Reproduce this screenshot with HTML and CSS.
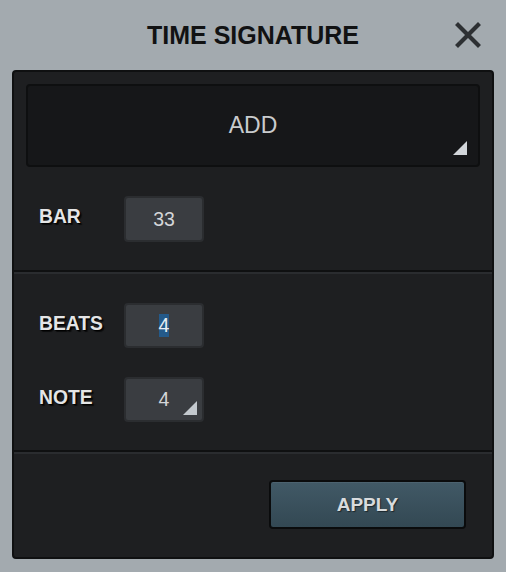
FILE: index.html
```html
<!DOCTYPE html>
<html>
<head>
<meta charset="utf-8">
<link rel="stylesheet" href="styles.css">
</head>
<body>
<div class="dialog">
  <div class="header">
    <div class="title">TIME SIGNATURE</div>
    <div class="close">
      <svg width="26" height="26" viewBox="0 0 26 26"><path d="M3 3 L23 23 M23 3 L3 23" stroke="#2d3033" stroke-width="4.2" stroke-linecap="square" fill="none"/></svg>
    </div>
  </div>
  <div class="panel">
    <div class="section first">
      <div class="mode">ADD<span class="tri big"></span></div>
      <div class="row bar-row">
        <div class="label">BAR</div>
        <div class="field tall">33</div>
      </div>
    </div>
    <div class="divider"></div>
    <div class="section">
      <div class="row">
        <div class="label">BEATS</div>
        <div class="field"><span class="sel">4</span></div>
      </div>
      <div class="row second">
        <div class="label">NOTE</div>
        <div class="field">4<span class="tri small"></span></div>
      </div>
    </div>
    <div class="divider"></div>
    <div class="footer">
      <div class="apply">APPLY</div>
    </div>
  </div>
</div>
</body>
</html>
```
FILE: styles.css
```css
html, body {
  margin: 0;
  padding: 0;
  background: #a3aaaf;
  font-family: "Liberation Sans", Arial, sans-serif;
}
.dialog {
  width: 506px;
  height: 572px;
}
.header {
  height: 70px;
  position: relative;
  display: flex;
  align-items: center;
  justify-content: center;
}
.title {
  font-weight: bold;
  font-size: 25px;
  color: #111213;
  margin-top: 1px;
}
.close {
  position: absolute;
  right: 25px;
  top: 22px;
  width: 26px;
  height: 26px;
}
.close svg { display: block; }
.panel {
  margin: 0 12px 0 12px;
  height: 489px;
  box-sizing: border-box;
  background: #1e1f21;
  border: 2px solid #0f1011;
  border-radius: 4px;
  display: flex;
  flex-direction: column;
}
.section {
  padding: 29px 12px 28px 12px;
}
.section.first {
  padding-top: 12px;
  padding-bottom: 28px;
}
.mode {
  position: relative;
  height: 83px;
  box-sizing: border-box;
  background: #161719;
  border: 2px solid #0e0f10;
  border-radius: 4px;
  color: #c9cbcd;
  font-size: 23px;
  display: flex;
  align-items: center;
  justify-content: center;
}
.tri {
  position: absolute;
  width: 0;
  height: 0;
  border-style: solid;
  border-width: 0 0 14px 14px;
  border-color: transparent transparent #d2d6da transparent;
}
.tri.big { right: 11px; bottom: 10px; }
.tri.small { right: 5px; bottom: 5px; border-color: transparent transparent #c3c9ce transparent; }
.row {
  display: flex;
  align-items: center;
  padding-left: 13px;
}
.bar-row { margin-top: 29px; }
.row.second { margin-top: 29px; }
.label {
  width: 85px;
  font-weight: bold;
  font-size: 19.3px;
  color: #e4e5e6;
  text-shadow: 1px 1px 1px #000, 2px 2px 1px rgba(0,0,0,0.6);
  margin-top: -4px;
}
.field {
  position: relative;
  width: 80px;
  height: 45px;
  box-sizing: border-box;
  background: #3a3d41;
  border: 2px solid #2b2d30;
  border-radius: 4px;
  color: #d4d6d8;
  font-size: 19.5px;
  display: flex;
  align-items: center;
  justify-content: center;
}
.field.tall { height: 46px; }
.sel {
  background: #245a8a;
  color: #e8eef4;
  padding: 1px 0;
  line-height: 21px;
}
.divider {
  height: 2px;
  background: #0f1011;
  border-bottom: 2px solid #2a2c2f;
}
.footer {
  flex: 1;
  display: flex;
  justify-content: flex-end;
  align-items: flex-start;
  padding: 26px 26px 0 0;
}
.apply {
  width: 197px;
  height: 49px;
  box-sizing: border-box;
  border: 2px solid #0a0b0c;
  border-radius: 4px;
  background: linear-gradient(#415966, #334853);
  box-shadow: inset 0 1px 0 rgba(255,255,255,0.06);
  color: #d8dbdd;
  font-weight: bold;
  font-size: 19px;
  display: flex;
  align-items: center;
  justify-content: center;
  text-shadow: 1px 1px 1px rgba(0,0,0,0.5);
}
```
